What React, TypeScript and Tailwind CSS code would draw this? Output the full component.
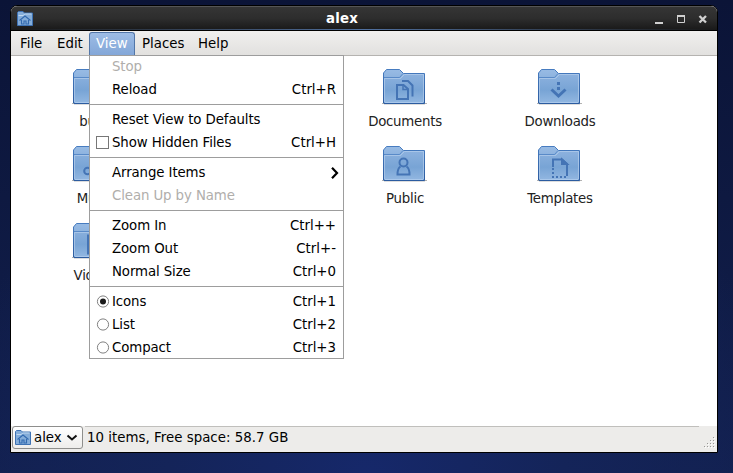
import React from 'react';

type Glyph = 'plain' | 'docs' | 'down' | 'person' | 'template' | 'music' | 'video';

function FolderGlyph({ kind }: { kind: Glyph }) {
  const p = { fill: 'none', stroke: '#4474b5', strokeWidth: 2 };
  switch (kind) {
    case 'docs':
      return (
        <g {...p}>
          <path d="M15 16h6.500l4.500 4v10h-11z" />
          <path d="M21 16v4.500h5" strokeWidth="1.500" />
          <path d="M20 12h6l4.500 4.500v11" />
        </g>
      );
    case 'down':
      return (
        <g fill="#4474b5">
          <path d="M20 13h3v3h-3zM20 18h3v3h-3z" />
          <path d="M14.500 20.500l7 6.500l7-6.500" fill="none" stroke="#4474b5" strokeWidth="3" />
        </g>
      );
    case 'person':
      return (
        <g {...p}>
          <circle cx="21.500" cy="16.500" r="4" />
          <path d="M18.500 20.500c-2.500 1.500-3 4-3 8h12c0-4-.5-6.500-3-8" />
        </g>
      );
    case 'template':
      return (
        <g {...p}>
          <path d="M16 21v-7.500h9l5 4.500v12" />
          <path d="M25 13.500v4.500h5z" fill="#4474b5" />
          <path d="M15 23h2M15 27h2M15 31h2M19 31h2M23 31h2M27 31h2" />
        </g>
      );
    case 'music':
      return <circle cx="15.500" cy="25" r="3.300" {...p} />;
    case 'video':
      return <path d="M16.500 13h12v17h-12z" {...p} strokeWidth="3" />;
    default:
      return null;
  }
}

function Folder({ kind }: { kind: Glyph }) {
  return (
    <svg width="46" height="38" viewBox="0 0 46 38" className="block shrink-0">
      <defs>
        <linearGradient id="folderBody" x1="0" y1="0" x2="0" y2="1">
          <stop offset="0" stopColor="#8cb1de" />
          <stop offset=".55" stopColor="#78a4d5" />
          <stop offset="1" stopColor="#92b7e1" />
        </linearGradient>
        <linearGradient id="folderTab" x1="0" y1="0" x2="0" y2="1">
          <stop offset="0" stopColor="#98bbe4" />
          <stop offset="1" stopColor="#6d9acf" />
        </linearGradient>
        <linearGradient id="folderEdge" x1="0" y1="0" x2="0" y2="1">
          <stop offset="0" stopColor="#477cc0" />
          <stop offset="1" stopColor="#2c5ca0" />
        </linearGradient>
      </defs>
      <path d="M0 34.500h45" stroke="#555" strokeOpacity=".45" />
      <path d="M2 35.500h41" stroke="#777" strokeOpacity=".25" />
      <path d="M1.500 34V4L4.500.5h13L21.500 4.500h21V34.500H2.500z" fill="url(#folderTab)" stroke="url(#folderEdge)" />
      <path d="M2.500 9.500h16l4-4h19v27.500q0 1-1 1h-37q-1 0-1-1z" fill="url(#folderBody)" />
      <path d="M2.500 33V9.500h16l4-4h19V33" fill="none" stroke="#b3cdeb" strokeOpacity=".7" />
      <path d="M2 8.500h15.500l3.500-4" fill="none" stroke="#477cc0" strokeOpacity=".75" />
      <path d="M3 33.500h38" stroke="#aac8eb" />
      <path d="M2 34.500h40" stroke="#2c5ca0" />
      <FolderGlyph kind={kind} />
    </svg>
  );
}

function HomeFolder() {
  return (
    <svg width="16" height="15" viewBox="0 0 16 15" className="block shrink-0">
      <path d="M.5 14.500V1.500l1-1H6l1.500 1.500h8v12.500z" fill="#84add9" stroke="#3e72b3" />
      <path d="M1.500 4.500h4.500l2-1.500h6.500" fill="none" stroke="#c0d8f0" />
      <path d="M2.500 9.500L8 5l5.500 4.500M4.500 9v4h2.500v-3h2v3h2.500V9" fill="none" stroke="#336aaf" strokeWidth="1.100" />
    </svg>
  );
}

function Place({ name, kind }: { name?: string; kind?: Glyph }) {
  return (
    <div className="flex h-[77px] flex-col items-center">
      {kind && <Folder kind={kind} />}
      {name && <span className="mt-[7px] pl-px tracking-[-0.25px] text-[#222]">{name}</span>}
    </div>
  );
}

type RowProps = { label: string; keys?: string; disabled?: boolean; mark?: 'check' | 'on' | 'off'; sub?: boolean };

function MenuRow({ label, keys, disabled, mark, sub }: RowProps) {
  return (
    <div className={'flex h-[23px] items-center pl-[7px] pr-[8px] ' + (disabled ? 'text-[#b0aeab]' : 'text-black')}>
      <span className="flex w-4 shrink-0 items-center">
        {mark === 'check' && <span className="h-[13px] w-[13px] border border-[#777] bg-white" />}
        {(mark === 'on' || mark === 'off') && (
          <svg width="14" height="13" viewBox="0 0 14 13">
            <circle cx="7" cy="6.500" r="5.600" fill="#fff" stroke="#808080" />
            {mark === 'on' && <circle cx="7" cy="6.500" r="3" fill="#1a1a1a" />}
          </svg>
        )}
      </span>
      <span className="grow tracking-[-0.1px]">{label}</span>
      {keys && <span>{keys}</span>}
      {sub && (
        <svg width="8" height="12" viewBox="0 0 8 12" className="-mr-[3px]">
          <path d="M1 .8L6 6L1 11.200" fill="none" stroke="#000" strokeWidth="2.200" />
        </svg>
      )}
    </div>
  );
}

function Separator() {
  return (
    <div className="flex h-[7px] items-center">
      <div className="h-px w-full bg-[#9d9d9d]" />
    </div>
  );
}

function ViewMenu() {
  return (
    <div className="absolute left-[-1px] top-[22px] z-10 w-[255px] bg-white outline outline-1 -outline-offset-1 outline-[#9d9d9d]">
      <MenuRow label="Stop" disabled />
      <MenuRow label="Reload" keys="Ctrl+R" />
      <Separator />
      <MenuRow label="Reset View to Defaults" />
      <MenuRow label="Show Hidden Files" keys="Ctrl+H" mark="check" />
      <Separator />
      <MenuRow label="Arrange Items" sub />
      <MenuRow label="Clean Up by Name" disabled />
      <Separator />
      <MenuRow label="Zoom In" keys="Ctrl++" />
      <MenuRow label="Zoom Out" keys="Ctrl+-" />
      <MenuRow label="Normal Size" keys="Ctrl+0" />
      <Separator />
      <MenuRow label="Icons" keys="Ctrl+1" mark="on" />
      <MenuRow label="List" keys="Ctrl+2" mark="off" />
      <MenuRow label="Compact" keys="Ctrl+3" mark="off" />
    </div>
  );
}

export default function App() {
  return (
    <div className="h-[473px] w-[733px] overflow-hidden bg-[radial-gradient(ellipse_60%_75%_at_50%_100%,#16286a_0%,#142459_45%,transparent_100%),linear-gradient(#0b1437,#12204f)] pl-[10px] pt-[5px] font-['DejaVu_Sans',sans-serif] text-[13.330px] leading-4 whitespace-nowrap">
      <div className="flex h-[448px] w-[708px] flex-col overflow-hidden rounded-t-[7px] border border-black bg-[#edecea]">
        <div className="flex h-[25px] shrink-0 flex-col border-b border-t border-b-black border-t-[#555] bg-linear-to-b from-[#353535] via-[#2d2d2d] to-[#191919]">
          <div className="flex h-[22px] items-center pl-[6px] pr-[9px]">
            <HomeFolder />
            <span className="ml-[293px] grow pt-px font-bold tracking-[0.25px] text-white">alex</span>
            <svg width="54" height="13" viewBox="0 0 54 13" fill="none" stroke="#d0d0d0" className="mt-[2px]">
              <path d="M1 10h8" strokeWidth="2" />
              <path d="M23.500 3.500h7v6h-7z" />
              <path d="M23 3h8" strokeWidth="2" />
              <path d="M45.500 3l6.500 6.500M52 3l-6.500 6.500" strokeWidth="2.300" />
            </svg>
          </div>
          <div className="h-px w-full bg-linear-to-r from-[#191919] via-[#50709f] to-[#191919]" />
        </div>
        <div className="flex h-[25px] shrink-0 border-b border-[#b5b3b0] bg-linear-to-b from-[#f0efee] to-[#e2e1df] pl-px pt-px">
          <span className="w-[37px] pl-[8px] pt-[4px]">File</span>
          <span className="w-[40px] pl-[8px] pt-[4px]">Edit</span>
          <div className="relative h-[23px] w-[46px] rounded-t-[3px] border border-b-0 border-[#5276a8] bg-linear-to-b from-[#9dbce5] to-[#83a7d8] pl-[6px] pt-[3px] text-white">
            View
            <ViewMenu />
          </div>
          <span className="w-[56px] pl-[7px] pt-[4px]">Places</span>
          <span className="pl-[7px] pt-[4px]">Help</span>
        </div>
        <div className="grid grow grid-cols-[repeat(4,155px)] content-start bg-white pl-[6px] pt-[13px]">
          <Place name="build" kind="plain" />
          <Place />
          <Place name="Documents" kind="docs" />
          <Place name="Downloads" kind="down" />
          <Place name="Music" kind="music" />
          <Place />
          <Place name="Public" kind="person" />
          <Place name="Templates" kind="template" />
          <Place name="Videos" kind="video" />
        </div>
        <div className="flex h-[26px] shrink-0 pl-px">
          <div className="flex h-[23px] w-[71px] shrink-0 items-center rounded-[3px] border border-[#8e8e8c] bg-linear-to-b from-white to-[#eeedeb] pl-[2px]">
            <HomeFolder />
            <span className="ml-[3px]">alex</span>
            <svg width="12" height="8" viewBox="0 0 12 8" className="ml-[4px]">
              <path d="M1.500 1.500L6 5.500L10.500 1.500" fill="none" stroke="#111" strokeWidth="2" />
            </svg>
          </div>
          <div className="ml-[2px] h-[20px] w-[614px] border-t border-[#c0bfbc] pl-[2px] pt-[3px] tracking-[0.03px]">10 items, Free space: 58.7 GB</div>
          <svg width="12" height="12" viewBox="0 0 12 12" className="ml-[5px] mt-[11px]" fill="#999896">
            <path d="M9 0h1v1h-1zM6 3h1v1h-1zM9 3h1v1h-1zM3 6h1v1h-1zM6 6h1v1h-1zM9 6h1v1h-1zM0 9h1v1h-1zM3 9h1v1h-1zM6 9h1v1h-1zM9 9h1v1h-1z" />
            <path fill="#fff" d="M10 1h1v1h-1zM7 4h1v1h-1zM10 4h1v1h-1zM4 7h1v1h-1zM7 7h1v1h-1zM10 7h1v1h-1zM1 10h1v1h-1zM4 10h1v1h-1zM7 10h1v1h-1zM10 10h1v1h-1z" />
          </svg>
        </div>
      </div>
    </div>
  );
}
